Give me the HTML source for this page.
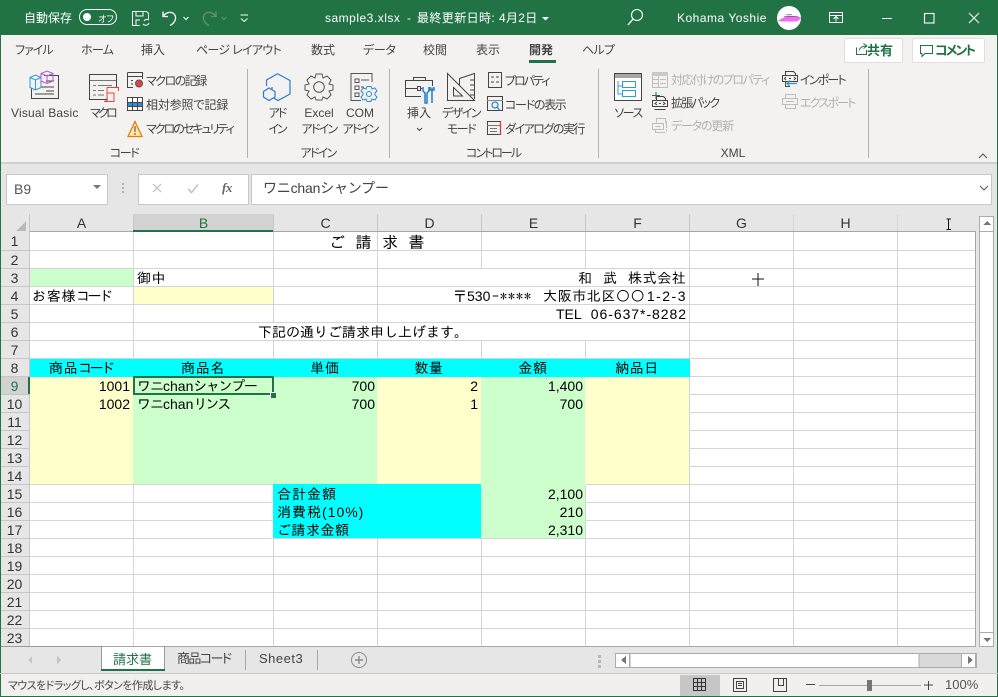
<!DOCTYPE html>
<html lang="ja"><head><meta charset="utf-8"><title>sample3.xlsx</title>
<style>
html,body{margin:0;padding:0}
body{width:998px;height:697px;overflow:hidden;background:#e6e6e6;position:relative;font-family:"Liberation Sans","Noto Sans CJK JP",sans-serif;color:#444}
.a,.t,.c,.h,.n{position:absolute}
.t{white-space:nowrap;font-size:12px;line-height:16px;height:16px;font-feature-settings:"palt"}
.m{transform:translateX(-50%)}
.w{color:#fff}.g{color:#b1b1b1}
.c{font-family:"IPAGothic","Liberation Sans",sans-serif;font-size:14px;line-height:18px;height:18px;color:#000;white-space:nowrap}
.d{font-family:"Liberation Sans",sans-serif}
.k{letter-spacing:-2.7px}
.s{letter-spacing:-1.4px}
.j{letter-spacing:.6px}
.r{text-align:right}
.h{font-size:14px;line-height:18px;text-align:center;color:#333;font-family:"Liberation Sans",sans-serif}
.n{left:0;width:29px;height:18px;font-size:14px;line-height:19px;text-align:center;color:#333;font-family:"Liberation Sans",sans-serif}
svg{position:absolute;left:0;top:0;overflow:visible}
</style></head><body>
<div class="a" style="left:0;top:0;width:998px;height:35px;background:#217346"></div>
<div class="a" style="left:0;top:35px;width:998px;height:127px;background:#f3f2f1"></div>
<div class="a" style="left:0;top:162px;width:998px;height:2px;background:#d2d0ce"></div>
<div class="a" style="left:0;top:674px;width:998px;height:22px;background:#f1f0ef"></div>
<div class="a" style="left:6px;top:174px;width:100px;height:29px;background:#fff;border:1px solid #c8c8c8"></div>
<div class="a" style="left:138px;top:174px;width:109px;height:29px;background:#fff;border:1px solid #c8c8c8"></div>
<div class="a" style="left:251px;top:174px;width:739px;height:29px;background:#fff;border:1px solid #c8c8c8"></div>
<div class="a" style="left:30px;top:232px;width:946px;height:414px;background:#fff"></div>
<div class="a" style="left:844px;top:38px;width:57px;height:23px;background:#fff;border:1px solid #e1dfdd;border-radius:2px"></div>
<div class="a" style="left:912px;top:38px;width:71px;height:23px;background:#fff;border:1px solid #e1dfdd;border-radius:2px"></div>

<!-- fills -->
<div class="a" style="left:30px;top:269px;width:103px;height:18px;background:#ccffcc"></div>
<div class="a" style="left:133px;top:287px;width:141px;height:18px;background:#ffffcc"></div>
<div class="a" style="left:30px;top:359px;width:660px;height:18px;background:#00ffff"></div>
<div class="a" style="left:30px;top:377px;width:103px;height:108px;background:#ffffcc"></div>
<div class="a" style="left:133px;top:377px;width:244px;height:108px;background:#ccffcc"></div>
<div class="a" style="left:377px;top:377px;width:104px;height:108px;background:#ffffcc"></div>
<div class="a" style="left:481px;top:377px;width:105px;height:162px;background:#ccffcc"></div>
<div class="a" style="left:585px;top:377px;width:105px;height:108px;background:#ffffcc"></div>
<div class="a" style="left:273px;top:484px;width:208px;height:55px;background:#00ffff"></div>

<!-- gridlines + all icons -->
<svg width="998" height="697" viewBox="0 0 998 697" fill="none" stroke="none" shape-rendering="crispEdges">
<g stroke="#d4d4d4">
<path d="M30 250.5H976M30 268.5H976M30 286.5H976M30 304.5H976M30 322.5H976M30 340.5H976"/>
<path d="M30 358.5H976"/>
<path d="M690 376.5H976M690 394.5H976M690 412.5H976M690 430.5H976M690 448.5H976M690 466.5H976M690 484.5H976"/>
<path d="M30 484.5H273M586 484.5H976M30 502.5H273M586 502.5H976M30 520.5H273M586 520.5H976M30 538.5H976M30 556.5H976M30 574.5H976M30 592.5H976M30 610.5H976M30 628.5H976"/>
<path d="M133.5 232V359M133.5 485V646M273.5 232V322M273.5 341V359M273.5 539V646M377.5 232V322M377.5 341V359M481.5 232V268M481.5 341V359M585.5 232V268M585.5 341V359M481.5 539V646M377.5 539V646M585.5 485V646M689.5 232V359M689.5 377V646M793.5 215V646M897.5 215V646"/>
</g>
<rect x="0" y="0" width="1" height="697" fill="#217346"/>
<rect x="997" y="0" width="1" height="697" fill="#217346"/>
<rect x="0" y="696" width="998" height="1" fill="#217346"/>
<!-- header lines -->
<rect x="133" y="214" width="140" height="17" fill="#d2d2d2"/>
<rect x="1" y="377" width="28" height="17" fill="#d2d2d2"/>
<g stroke="#c6c6c6"><path d="M29.5 214V646M133.5 214V231M273.5 214V231M377.5 214V231M481.5 214V231M585.5 214V231M689.5 214V231"/>
<path d="M1 250.5H29M1 268.5H29M1 286.5H29M1 304.5H29M1 322.5H29M1 340.5H29M1 358.5H29M1 376.5H29M1 394.5H29M1 412.5H29M1 430.5H29M1 448.5H29M1 466.5H29M1 484.5H29M1 502.5H29M1 520.5H29M1 538.5H29M1 556.5H29M1 574.5H29M1 592.5H29M1 610.5H29M1 628.5H29"/></g>
<rect x="30" y="231" width="946" height="1" fill="#a6a6a6"/>
<rect x="133" y="230" width="140" height="2" fill="#217346"/>
<rect x="28" y="377" width="2" height="17" fill="#217346"/>
<rect x="975" y="231" width="1" height="416" fill="#a6a6a6"/>
<rect x="1" y="646" width="975" height="1" fill="#a6a6a6"/>
<path d="M16 231H26V221Z" fill="#b9b9b9"/>
<!-- selection -->
<rect x="133" y="376" width="141" height="2" fill="#217346"/><rect x="133" y="393" width="141" height="2" fill="#217346"/>
<rect x="133" y="376" width="2" height="19" fill="#217346"/><rect x="272" y="376" width="2" height="19" fill="#217346"/>
<rect x="270" y="392" width="6" height="6" fill="#fff"/><rect x="271" y="393" width="5" height="5" fill="#217346"/>
<!-- vertical scrollbar -->
<rect x="979.5" y="216.5" width="14" height="430" fill="#fff" stroke="#ababab"/>
<path d="M979 231.5H994M979 632.5H994" stroke="#ababab"/>
<path d="M983 225H991L987 221Z" fill="#777"/><path d="M983 638H991L987 642Z" fill="#777"/>
<!-- horizontal scrollbar -->
<rect x="615.5" y="653.5" width="361" height="14" fill="#d9d9d9" stroke="#ababab"/>
<rect x="630" y="653.5" width="289" height="14" fill="#fff" stroke="#ababab"/>
<rect x="615.5" y="653.5" width="14" height="14" fill="#fff" stroke="#ababab"/>
<rect x="961.5" y="653.5" width="14" height="14" fill="#fff" stroke="#ababab"/>
<path d="M626 656V664L621 660Z" fill="#777"/><path d="M968 656V664L973 660Z" fill="#777"/>
<rect x="598" y="655" width="3" height="3" fill="#b5b5b5"/><rect x="598" y="660" width="3" height="3" fill="#b5b5b5"/><rect x="598" y="665" width="3" height="3" fill="#b5b5b5"/>
<!-- tabs -->
<path d="M1 646.500H101M101.500 646V670M164.500 646V670" stroke="#9a9a9a"/>
<rect x="102" y="647" width="62" height="22" fill="#fff"/><rect x="101" y="669" width="64" height="2" fill="#217346"/>
<rect x="245" y="650" width="1" height="20" fill="#a6a6a6"/><rect x="317" y="650" width="1" height="20" fill="#a6a6a6"/>
<rect x="0" y="673" width="998" height="1" fill="#c8c8c8"/>
<path d="M32 656V664L28 660ZM57 656V664L61 660Z" fill="#c2c2c2"/>
<!-- status bar -->
<rect x="680" y="675" width="40" height="21" fill="#c6c6c6"/>
<g stroke="#333"><path d="M693.500 678.500H705.500V690.500H693.500ZM697.500 678V691M701.500 678V691M693 682.500H706M693 686.500H706"/></g>
<g stroke="#444"><path d="M733.500 678.500H746.500V691.500H733.500ZM736.500 681.500H743.500V688.500H736.500ZM738 683.500H742M738 685.500H742"/></g>
<g stroke="#444"><path d="M773.500 678.500H786.500V691.500H773.500ZM778.500 678V685.500H783.500V678"/></g>
<rect x="806" y="684" width="9" height="1" fill="#444"/>
<rect x="819" y="685" width="102" height="1" fill="#a8a8a8"/>
<rect x="867" y="680" width="5" height="11" fill="#757575"/>
<path d="M924 685H933M928.500 681V690" stroke="#444"/>
</svg>

<svg width="998" height="697" viewBox="0 0 998 697" fill="none" stroke-width="1">
<!-- title bar -->
<rect x="79.500" y="9.500" width="37" height="15" rx="7.500" stroke="#fff"/><circle cx="87" cy="17" r="4" fill="#fff"/>
<g stroke="#fff" stroke-width="1">
<path d="M132.500 11.500H146.500L148.500 13.500V19M132.500 11.500V25.500H140M136 11.500V16H143V11.500M136 25V20H140"/>
<path d="M144 21A3.500 3.500 0 0 1 149 20M149 23A3.500 3.500 0 0 1 143 24" stroke-width="1"/>
<path d="M163 11.500V16.500H168M163.500 16C166 12 172 11 174.500 14.500C177 18 175 23 170 25.500" stroke-width="1.300"/>
<path d="M183.500 17L186 19.500L188.500 17"/>
<path d="M240.500 15H248M241 18.500L244.200 21.500L247.500 18.500"/>
</g>
<g stroke="#5e9476"><path d="M216 11.500V16.500H211M215.500 16C213 12 207 11 204.500 14.500C202 18 204 23 209 25.500" stroke-width="1.300"/><path d="M221.500 17L224 19.500L226.500 17"/></g>
<path d="M542 17H549L545.500 20.500Z" fill="#fff"/>
<g stroke="#fff">
<circle cx="637" cy="15" r="5.500" stroke-width="1.100"/><path d="M633 19L628 25" stroke-width="1.300"/>
<path d="M829.500 12.500H842.500V22.500H829.500ZM829.500 15.500H842.500M836 21.500V17M833.500 19L836 16.500L838.500 19"/>
<path d="M882 18.500H892"/>
<rect x="924.500" y="13.500" width="9.500" height="9.500" stroke-width="1.100"/>
<path d="M969 13L979 23M979 13L969 23" stroke-width="1.100"/>
</g>
<circle cx="789" cy="18" r="12" fill="#fff"/>
<path d="M778 20.500L785 17L788 15.500L793 16L800 17L801 18.500L797 21.500H786L781 21.500Z" fill="#f26cf0"/>
<path d="M784 16.500H798M786 14.500H792" stroke="#444" stroke-width=".6"/>
<!-- tab underline -->
<rect x="529" y="60" width="27" height="3" fill="#217346"/>
<!-- share/comment -->
<path d="M856.500 47.500V54.500H866.500V50M859 50.500C860 47.500 862 46 866 46M863.500 43.500L867 46L863.500 48.500" stroke="#217346"/>
<path d="M920.500 45.500H932.500V53.500H925L922 56.500V53.500H920.500Z" stroke="#217346"/>
<!-- Visual Basic -->
<path d="M44 75.500H58.500V98.500H31.500V88M46 81H54M41 87H54M35 94H54M46 91H54" stroke="#444"/>
<path d="M30 77.500L35.500 75L41 77.500V87.500L35.500 90L30 87.500ZM30 77.500L35.500 80L41 77.500M35.500 80V90" stroke="#2e9bdc" stroke-width="1"/>
<path d="M41 73.500L47 71L53 73.500V81L47 83.500L41 81ZM41 73.500L47 76L53 73.500M47 76V83.500" stroke="#b45ad0"/>
<!-- macro -->
<path d="M108 99.500H89.500V74.500H116.500V87" stroke="#444"/>
<path d="M90 80.500H116M93 85.500H96M93 90.500H96M93 95H96M98 85.500H112M98 90.500H104M98 95H104" stroke="#777"/>
<path d="M107 87.500H118.500V91M107 87.500V98C107 100 106 101.500 104 101.500M104 101.500H114V93H107" stroke="#e8413c"/>
<!-- rec -->
<path d="M127.500 72.500H142.500V79M127.500 72.500V87.500H133M127.500 76.500H142.500M131 80.500H133M131 84H133" stroke="#444"/>
<circle cx="139" cy="83.500" r="3.500" fill="#e8413c" stroke="#555" stroke-width="1"/>
<!-- relative -->
<rect x="127.500" y="97.500" width="15" height="13" fill="#fff" stroke="#444"/>
<rect x="128" y="103" width="14" height="4" fill="#2e8fd8"/>
<path d="M132.500 98V110M137.500 98V110M128 102.500H142M128 106.500H142" stroke="#444"/>
<!-- warning -->
<path d="M135 121.500L142 136.500H128Z" fill="#ffe9a8" stroke="#e97b16" stroke-width="1.300"/>
<path d="M135 126V132M135 133V135" stroke="#444"/>
<g stroke="#b3b1af"><path d="M247.500 69V158M389.500 69V158M598.500 69V158M868.500 69V158"/></g>
<!-- add-ins icons -->
<path d="M278 74L290 80.500V94L278 100.500L272 97V87" stroke="#2b7cd3" stroke-width="1.200"/>
<path d="M266.500 86V80L278 73.500" stroke="#2b7cd3" stroke-width="1.200"/>
<path d="M269 88L275 91.500V97L269 100.500L263.500 97V91.500Z" stroke="#2b7cd3" stroke-width="1.200" fill="#f3f2f1"/>
<circle cx="319" cy="87" r="5.300" stroke="#555"/>
<path d="M316 74H322L323 78L327 76L331 80L329 84L333 85V90L329 91L331 95L327 99L323 97L322 100H316L315 97L311 99L307 95L309 91L305 90V85L309 84L307 80L311 76L315 78Z" stroke="#555"/>
<path d="M372 82V73.500H351V100.500H361M355 79H359V82.500H355ZM355 86H359V89.500H355ZM355 93H359V96.500H355ZM361 80H369M361 87H364" stroke="#555"/>
<circle cx="369" cy="94" r="2.500" stroke="#2b8cd4"/>
<path d="M367 86.500H371L372 89L375 88L377 91L375 93V95L377 97L375 100L372 99L371 101.500H367L366 99L363 100L361 97L363 95V93L361 91L363 88L366 89Z" stroke="#2b8cd4"/>
<!-- insert toolbox -->
<path d="M421 96.500H405.500V80.500H432.500V86M413.500 80.500V77.500H425.500V80.500M405.500 88.500H417M421 88.500H422M417.500 86.500H420.500V90.500H417.500Z" stroke="#444"/>
<path d="M423 87V91L425 93V103H427V93L429 91V87M432 87.500V103M430 87V90H434V87" stroke="#1d7fc7" stroke-width="1.500"/>
<!-- design mode -->
<path d="M447.500 73.500L474.500 100.500H447.500ZM453.500 87.500L462.500 96H453.500Z" stroke="#444"/>
<path d="M459.500 85V78.500L474.500 73.500V99M470 80H474M470 85H474M470 90H474M470 95H474" stroke="#444"/>
<!-- small control icons -->
<path d="M488.500 72.500H501.500V87.500H488.500ZM491 77H494M491 82H494M496 77H499M496 82H499" stroke="#444"/>
<rect x="487.500" y="96.500" width="15" height="14" stroke="#444"/>
<path d="M487 100.500H503" stroke="#888"/>
<circle cx="495" cy="105" r="3" stroke="#2b8cd4" stroke-width="1.300"/><path d="M497 107L500 110.500" stroke="#2b8cd4" stroke-width="1.300"/>
<rect x="487.500" y="121.500" width="13" height="13" stroke="#444"/>
<path d="M487 125.500H500M490 128.500H497M490 131.500H497" stroke="#777"/>
<path d="M500.500 121.500V130M500.500 132V135" stroke="#e8413c" stroke-width="1.400"/>
<!-- source -->
<rect x="614.500" y="73.500" width="27" height="27" fill="#fff" stroke="#444"/>
<rect x="615" y="74" width="26" height="4" fill="#a6a6a6"/>
<path d="M622.500 81.500H635.500V87.500H622.500ZM622.500 90.500H635.500V96.500H622.500ZM618 81V94H622M618 86H622" stroke="#2e9bdc"/>
<!-- xml small -->
<g stroke="#bdbdbd">
<path d="M652.500 72.500H667.500V87.500H652.500ZM658.500 76V88M653 79.500H658M653 83.500H658M660 79.500H666M660 83.500H666"/>
<path d="M656.500 122.500V118.500H665.500V122.500M652.500 123.500H663.500V129.500H652.500ZM655.500 129.500V132.500H665M666.500 121V128M666.500 129.500V131.500M655.500 126.500H660.500"/>
<path d="M785.500 98V94.500H795.500V99M782.500 98.500H797.500V104.500H782.500ZM785.500 105V108.500H795.500V105M786 101.500H794"/>
</g>
<rect x="652" y="72" width="16" height="4" fill="#c9c9c9"/>
<rect x="782" y="94" width="0" height="0" fill="#c9c9c9"/>
<path d="M656.500 100V96.500H663.500L665.500 98.500V100M652.500 100.500H667.500V106.500H652.500ZM654.500 109.500H665.500M657 102L655 103.500L657 105M663 102L665 103.500L663 105M659 103.500H661" stroke="#444"/>
<path d="M652 95.500H660M656 92V99" stroke="#217346"/>
<path d="M785.500 75V71.500H793.500L795.500 73.500V75M782.500 75.500H797.500V81.500H782.500ZM785.500 82V86.500H790M786 77L784.500 78.500L786 80M794 77L795.500 78.500L794 80M789 78.500H791" stroke="#444"/>
<path d="M797 83.500H787M790 80.500L787 83.500L790 86.500" stroke="#2e8fd8" stroke-width="1.200"/>
<path d="M979 158L983 154L987 158" stroke="#555" stroke-width="1.100"/>
<path d="M417 128L419.500 130.500L422 128" stroke="#444"/>
<!-- name box / formula -->
<path d="M93 185H101L97 189Z" fill="#777"/>
<rect x="122" y="183" width="2" height="2" fill="#b0b0b0"/><rect x="122" y="187" width="2" height="2" fill="#b0b0b0"/><rect x="122" y="191" width="2" height="2" fill="#b0b0b0"/>
<path d="M153 184L161 192M161 184L153 192" stroke="#c6c6c6" stroke-width="1.300"/>
<path d="M188 189L191.500 192.500L198 184.500" stroke="#c6c6c6" stroke-width="1.700"/>
<path d="M980 186L984 190L988 186" stroke="#555"/>
<!-- sheet plus -->
<circle cx="359" cy="660" r="7.500" stroke="#8a8a8a"/><path d="M355 660H363M359 656V664" stroke="#8a8a8a" stroke-width="1.400"/>
<path d="M948.500 219.500V229M946.500 219H951M946.500 229.500H951" stroke="#111"/>
<path d="M752 279H764M758 273V286" stroke="#111"/>
</svg>

<!-- title text -->
<div class="t w" style="left:24px;top:10px;font-feature-settings:normal">自動保存</div>
<div class="t w" style="left:98px;top:11px;font-size:9px">オフ</div>
<div class="t w" style="left:325px;top:10px;letter-spacing:.5px">sample3.xlsx</div>
<div class="t w" style="left:407px;top:10px">-</div>
<div class="t w" style="left:417px;top:10px;letter-spacing:.4px;font-feature-settings:normal">最終更新日時:</div>
<div class="t w" style="left:499px;top:10px;letter-spacing:.3px;font-feature-settings:normal">4月2日</div>
<div class="t w" style="left:677px;top:10px;letter-spacing:.5px">Kohama Yoshie</div>

<!-- tabs -->
<div class="t" style="left:15px;top:42px;letter-spacing:-1px">ファイル</div>
<div class="t" style="left:81px;top:42px;letter-spacing:-.7px">ホーム</div>
<div class="t" style="left:141px;top:42px">挿入</div>
<div class="t" style="left:196px;top:42px;letter-spacing:-.7px">ページ レイアウト</div>
<div class="t" style="left:311px;top:42px">数式</div>
<div class="t" style="left:363px;top:42px;letter-spacing:-.3px">データ</div>
<div class="t" style="left:423px;top:42px">校閲</div>
<div class="t" style="left:476px;top:42px">表示</div>
<div class="t" style="left:529px;top:42px;font-weight:bold">開発</div>
<div class="t" style="left:582px;top:42px;letter-spacing:-.7px">ヘルプ</div>
<div class="t" style="left:867px;top:43px;font-weight:bold;color:#217346;font-size:13px">共有</div>
<div class="t" style="left:935px;top:43px;font-weight:bold;color:#217346;font-size:13px;letter-spacing:-2px">コメント</div>

<!-- ribbon -->
<div class="t" style="left:11px;top:105px;letter-spacing:.2px">Visual Basic</div>
<div class="t" style="left:90px;top:105px;letter-spacing:-2.7px">マクロ</div>
<div class="t" style="left:146px;top:73px;letter-spacing:-1.5px">マクロの記録</div>
<div class="t" style="left:146px;top:97px;letter-spacing:-.15px">相対参照で記録</div>
<div class="t" style="left:146px;top:121px;letter-spacing:-2px">マクロのセキュリティ</div>
<div class="t m" style="left:124px;top:145px;letter-spacing:-1.5px">コード</div>
<div class="t m" style="left:277px;top:105px;letter-spacing:-2px">アド</div>
<div class="t m" style="left:277px;top:121px;letter-spacing:-2px">イン</div>
<div class="t m" style="left:319px;top:105px">Excel</div>
<div class="t m" style="left:319px;top:121px;letter-spacing:-1.7px">アドイン</div>
<div class="t m" style="left:360px;top:105px">COM</div>
<div class="t m" style="left:360px;top:121px;letter-spacing:-1.7px">アドイン</div>
<div class="t m" style="left:318px;top:145px;letter-spacing:-1.7px">アドイン</div>
<div class="t m" style="left:419px;top:105px">挿入</div>
<div class="t m" style="left:461px;top:105px;letter-spacing:-1.5px">デザイン</div>
<div class="t m" style="left:461px;top:121px;letter-spacing:-1.5px">モード</div>
<div class="t" style="left:505px;top:73px;letter-spacing:-2px">プロパティ</div>
<div class="t" style="left:505px;top:97px;letter-spacing:-1.3px">コードの表示</div>
<div class="t" style="left:505px;top:121px;letter-spacing:-1.5px">ダイアログの実行</div>
<div class="t m" style="left:493px;top:145px;letter-spacing:-2px">コントロール</div>
<div class="t m" style="left:628px;top:105px;letter-spacing:-1.5px">ソース</div>
<div class="t g" style="left:671px;top:72px;letter-spacing:-1.5px">対応付けのプロパティ</div>
<div class="t" style="left:671px;top:95px;letter-spacing:-1.6px">拡張パック</div>
<div class="t g" style="left:671px;top:118px;letter-spacing:-1.2px">データの更新</div>
<div class="t" style="left:800px;top:72px;letter-spacing:-1.8px">インポート</div>
<div class="t g" style="left:800px;top:95px;letter-spacing:-1.8px">エクスポート</div>
<div class="t m" style="left:733px;top:145px">XML</div>

<!-- formula -->
<div class="t" style="left:14px;top:181px;font-size:14px;color:#555">B9</div>
<div class="t" style="left:222px;top:180px;font-family:'Liberation Serif',serif;font-style:italic;font-weight:bold;font-size:13px;color:#666;letter-spacing:-.5px">fx</div>
<div class="t" style="left:263px;top:180px;font-size:14px;letter-spacing:-.2px;color:#444;font-feature-settings:normal">ワニchanシャンプー</div>

<!-- col heads -->
<div class="h" style="left:30px;top:214px;width:103px">A</div>
<div class="h" style="left:134px;top:214px;width:139px;color:#217346">B</div>
<div class="h" style="left:274px;top:214px;width:103px">C</div>
<div class="h" style="left:378px;top:214px;width:103px">D</div>
<div class="h" style="left:482px;top:214px;width:103px">E</div>
<div class="h" style="left:586px;top:214px;width:103px">F</div>
<div class="h" style="left:690px;top:214px;width:103px">G</div>
<div class="h" style="left:794px;top:214px;width:103px">H</div>

<!-- row heads -->
<div class="n" style="top:232px">1</div><div class="n" style="top:251px">2</div><div class="n" style="top:269px">3</div><div class="n" style="top:287px">4</div><div class="n" style="top:305px">5</div><div class="n" style="top:323px">6</div><div class="n" style="top:341px">7</div><div class="n" style="top:359px">8</div><div class="n" style="top:377px;color:#217346">9</div><div class="n" style="top:395px">10</div><div class="n" style="top:413px">11</div><div class="n" style="top:431px">12</div><div class="n" style="top:449px">13</div><div class="n" style="top:467px">14</div><div class="n" style="top:485px">15</div><div class="n" style="top:503px">16</div><div class="n" style="top:521px">17</div><div class="n" style="top:539px">18</div><div class="n" style="top:557px">19</div><div class="n" style="top:575px">20</div><div class="n" style="top:593px">21</div><div class="n" style="top:611px">22</div><div class="n" style="top:629px">23</div>

<!-- cells -->
<div class="c" style="left:329px;top:233px;letter-spacing:10.5px;font-size:16px">ご請求書</div>
<div class="c j" style="left:137px;top:269px">御中</div>
<div class="c" style="left:578px;top:269px">和</div>
<div class="c" style="left:603px;top:269px">武</div>
<div class="c j" style="left:628px;top:269px">株式会社</div>
<div class="c k" style="left:32px;top:287px"><span style="letter-spacing:.7px">お客様</span>コード</div>
<div class="c" style="left:453px;top:287px">〒</div>
<div class="c d" style="left:467px;top:287px">530</div>
<div class="c" style="left:492px;top:287px;letter-spacing:1px">-****</div>
<div class="c j" style="left:543px;top:287px">大阪市北区○○</div>
<div class="c d r" style="left:587px;top:287px;width:100px;letter-spacing:1.5px">1-2-3</div>
<div class="c d" style="left:556px;top:305px">TEL</div>
<div class="c d r" style="left:587px;top:305px;width:100px;letter-spacing:.95px">06-637*-8282</div>
<div class="c" style="left:258px;top:323px">下記の通りご請求申し上げます。</div>
<div class="c" style="left:49px;top:359px"><span class="j">商品</span><span class="k">コード</span></div>
<div class="c j" style="left:133px;top:359px;width:140px;text-align:center">商品名</div>
<div class="c j" style="left:273px;top:359px;width:104px;text-align:center">単価</div>
<div class="c j" style="left:377px;top:359px;width:104px;text-align:center">数量</div>
<div class="c j" style="left:481px;top:359px;width:104px;text-align:center">金額</div>
<div class="c j" style="left:585px;top:359px;width:104px;text-align:center">納品日</div>
<div class="c d r" style="left:30px;top:377px;width:100px">1001</div>
<div class="c" style="left:137px;top:377px"><span style="letter-spacing:-1px">ワニ</span><span class="d">chan</span><span class="s">シャンプー</span></div>
<div class="c d r" style="left:273px;top:377px;width:102px">700</div>
<div class="c d r" style="left:377px;top:377px;width:101px">2</div>
<div class="c d r" style="left:481px;top:377px;width:102px">1,400</div>
<div class="c d r" style="left:30px;top:395px;width:100px">1002</div>
<div class="c" style="left:137px;top:395px"><span style="letter-spacing:-1px">ワニ</span><span class="d">chan</span><span style="letter-spacing:-2px">リンス</span></div>
<div class="c d r" style="left:273px;top:395px;width:102px">700</div>
<div class="c d r" style="left:377px;top:395px;width:101px">1</div>
<div class="c d r" style="left:481px;top:395px;width:102px">700</div>
<div class="c" style="left:277px;top:485px;letter-spacing:1px">合計金額</div>
<div class="c d r" style="left:481px;top:485px;width:102px">2,100</div>
<div class="c" style="left:277px;top:503px;letter-spacing:1px">消費税<span class="d">(10%)</span></div>
<div class="c d r" style="left:481px;top:503px;width:102px">210</div>
<div class="c" style="left:277px;top:521px;letter-spacing:.5px">ご請求金額</div>
<div class="c d r" style="left:481px;top:521px;width:102px">2,310</div>

<!-- sheets -->
<div class="t" style="left:113px;top:652px;font-size:13px;color:#217346;font-feature-settings:normal">請求書</div>
<div class="t" style="left:177px;top:651px;font-size:13px;letter-spacing:-1.6px">商品コード</div>
<div class="t" style="left:259px;top:651px;font-size:13px;letter-spacing:.5px">Sheet3</div>
<div class="t" style="left:8px;top:678px;font-size:11px;letter-spacing:-.55px">マウスをドラッグし、ボタンを作成します。</div>
<div class="t" style="left:945px;top:677px;font-size:13px;color:#555">100%</div>
</body></html>
